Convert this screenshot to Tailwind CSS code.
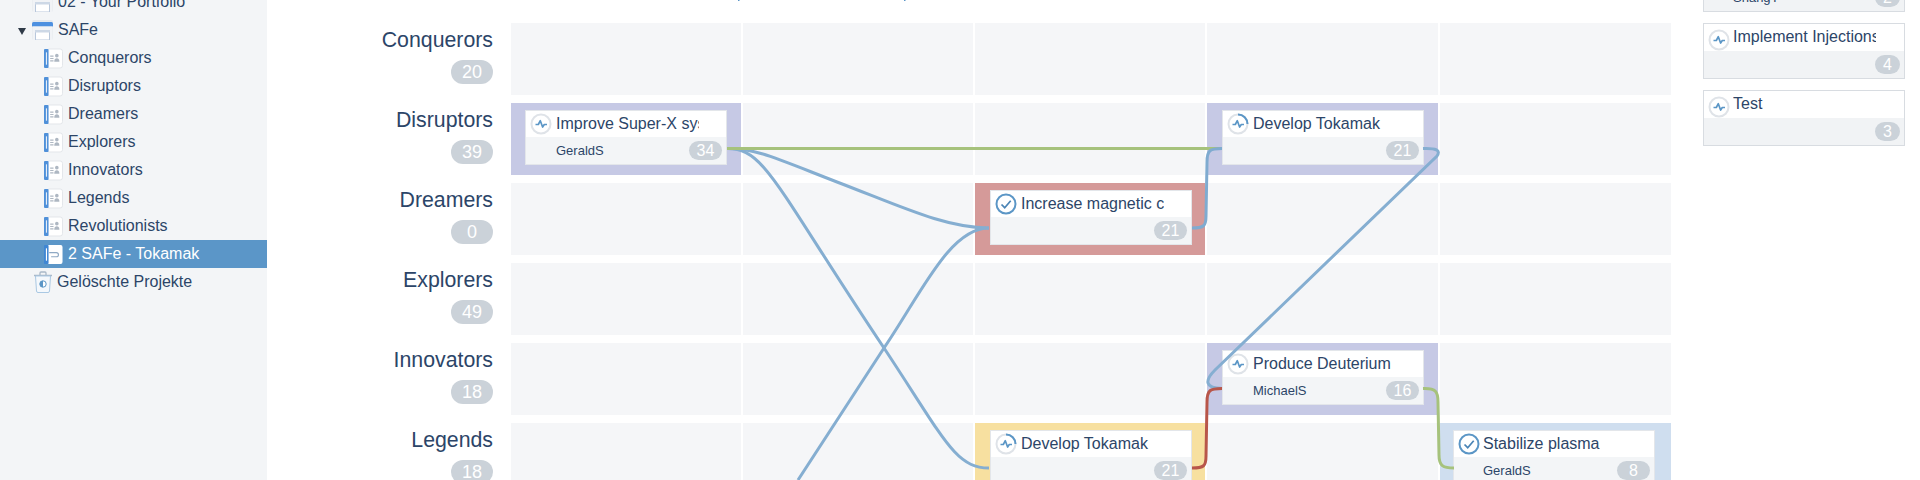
<!DOCTYPE html>
<html lang="de">
<head>
<meta charset="utf-8">
<title>2 SAFe - Tokamak</title>
<script src="https://cdn.jsdelivr.net/npm/@tailwindcss/browser@4"></script>
</head>
<body class="bg-white">
<svg width="0" height="0" class="absolute">
  <defs>
    <symbol id="team" viewBox="0 0 20 21">
      <rect x="3" y="0.5" width="16.500" height="20" rx="2.500" fill="#ffffff" stroke="#e2e5e9"/>
      <rect x="0" y="0.5" width="4.800" height="20" rx="1" fill="#4f90d9"/>
      <rect x="2" y="4" width="1.200" height="13" fill="#e6eef8"/>
      <path d="M6.500 8h3.500M6.500 10.500h3.500M6.500 13h3.500" stroke="#aeb7c2" stroke-width="1.200"/>
      <circle cx="13.500" cy="7.500" r="1.900" fill="#aeb7c2"/>
      <path d="M10.800 13.800c0-2.600 1.200-3.500 2.700-3.500s2.700.9 2.700 3.500z" fill="#aeb7c2"/>
    </symbol>
    <symbol id="board" viewBox="0 0 20 21">
      <rect x="3" y="0.5" width="16.500" height="20" rx="2" fill="#ffffff"/>
      <rect x="0" y="0.5" width="4.800" height="20" rx="1" fill="#3f86d3"/>
      <rect x="2" y="4" width="1.200" height="13" fill="#ffffff"/>
      <path d="M5.500 8.500h7.500a2.200 2.200 0 0 1 0 4.400h-5.500" fill="none" stroke="#8fa9c4" stroke-width="1.200"/>
    </symbol>
    <symbol id="portfolio" viewBox="0 0 21 20">
      <rect x="0" y="0" width="21" height="20" rx="2" fill="#e4e8ed"/>
      <path d="M0 6.500V3.500q0-1.500 1.500-1.500h18q1.500 0 1.500 1.500v3z" fill="#4d90e0"/>
      <rect x="0.500" y="6.500" width="20" height="13.500" fill="#f1f3f6"/>
      <rect x="3.500" y="10.500" width="14" height="9.500" fill="#ffffff" stroke="#b8c7db"/>
      <rect x="3" y="10" width="15" height="2.500" fill="#cdd8e6"/>
    </symbol>
    <symbol id="pulse" viewBox="0 0 22 22">
      <path d="M5.500 11.500h2.800l2-3.800 2.300 6.300 1.700-2.500h2.700" fill="none" stroke="#5b96c6" stroke-width="1.700" stroke-linejoin="round"/>
    </symbol>
    <symbol id="ring" viewBox="0 0 22 22">
      <circle cx="11" cy="11" r="9.500" fill="#ffffff" stroke="#dfe3e8" stroke-width="2"/>
      <use href="#pulse"/>
    </symbol>
    <symbol id="progress" viewBox="0 0 22 22">
      <circle cx="11" cy="11" r="9.500" fill="#ffffff" stroke="#dfe3e8" stroke-width="2"/>
      <path d="M11 1.500A9.500 9.500 0 0 1 20.500 11" fill="none" stroke="#5b96c6" stroke-width="2"/>
      <use href="#pulse"/>
    </symbol>
    <symbol id="done" viewBox="0 0 22 22">
      <circle cx="11" cy="11" r="9.500" fill="#ffffff" stroke="#5b96c6" stroke-width="2"/>
      <path d="M6.500 11.500l3.200 3.200 6-7" fill="none" stroke="#4a84b5" stroke-width="1.700"/>
    </symbol>
  </defs>
</svg>

<div class="relative flex h-[480px] w-[1920px] overflow-hidden font-['Liberation_Sans',Arial,sans-serif] text-[#2c4568]">

  <!-- Sidebar -->
  <aside class="h-full w-[267px] shrink-0 bg-[#f3f5f7] text-[16px]">
    <div class="-mt-[12px] flex flex-col">
      <div class="flex h-[28px] items-center pl-[32px]"><svg class="mr-[5px] h-[20px] w-[21px]"><use href="#portfolio"/></svg><span class="-mt-[1px]">02 - Your Portfolio</span></div>
      <div class="relative flex h-[28px] items-center pl-[32px]"><span class="absolute left-[18px] top-[12px] h-0 w-0 border-x-[4px] border-t-[7px] border-x-transparent border-t-[#2f3a47]"></span><svg class="mr-[5px] h-[20px] w-[21px]"><use href="#portfolio"/></svg><span class="-mt-[1px]">SAFe</span></div>
      <div class="flex h-[28px] items-center pl-[44px]"><svg class="mr-[5px] h-[21px] w-[19px]"><use href="#team"/></svg><span class="-mt-[1px]">Conquerors</span></div>
      <div class="flex h-[28px] items-center pl-[44px]"><svg class="mr-[5px] h-[21px] w-[19px]"><use href="#team"/></svg><span class="-mt-[1px]">Disruptors</span></div>
      <div class="flex h-[28px] items-center pl-[44px]"><svg class="mr-[5px] h-[21px] w-[19px]"><use href="#team"/></svg><span class="-mt-[1px]">Dreamers</span></div>
      <div class="flex h-[28px] items-center pl-[44px]"><svg class="mr-[5px] h-[21px] w-[19px]"><use href="#team"/></svg><span class="-mt-[1px]">Explorers</span></div>
      <div class="flex h-[28px] items-center pl-[44px]"><svg class="mr-[5px] h-[21px] w-[19px]"><use href="#team"/></svg><span class="-mt-[1px]">Innovators</span></div>
      <div class="flex h-[28px] items-center pl-[44px]"><svg class="mr-[5px] h-[21px] w-[19px]"><use href="#team"/></svg><span class="-mt-[1px]">Legends</span></div>
      <div class="flex h-[28px] items-center pl-[44px]"><svg class="mr-[5px] h-[21px] w-[19px]"><use href="#team"/></svg><span class="-mt-[1px]">Revolutionists</span></div>
      <div class="flex h-[28px] items-center bg-[#5b96c8] pl-[44px] text-white"><svg class="mr-[5px] h-[21px] w-[19px]"><use href="#board"/></svg><span class="-mt-[1px]">2 SAFe - Tokamak</span></div>
      <div class="flex h-[28px] items-center pl-[33px]">
        <svg class="mr-[4px] h-[22px] w-[20px]" viewBox="0 0 20 22">
          <path d="M1 4.500h18M7 4V2q0-1 1-1h4q1 0 1 1v2" fill="none" stroke="#a9b8c8" stroke-width="1.300"/>
          <path d="M2.500 5l1 15q.1 1.500 1.500 1.500h10q1.400 0 1.500-1.500l1-15z" fill="#f4f8fc" stroke="#a9c8e3" stroke-width="1"/>
          <circle cx="10" cy="13" r="3.200" fill="#ffffff" stroke="#5b96c6"/>
          <path d="M10 9.800a3.200 3.200 0 0 0 0 6.400z" fill="#5b96c6"/>
        </svg>
        <span class="-mt-[1px]">Gelöschte Projekte</span>
      </div>
    </div>
  </aside>

  <!-- Board -->
  <main class="w-[1404px] shrink-0 pt-[23px]">
    <div class="flex flex-col gap-[8px]">

      <div class="flex h-[72px]">
        <div class="flex w-[244px] flex-col items-end pr-[18px] pt-[5px]"><div class="text-[21.300px] leading-[24px]">Conquerors</div><div class="mt-[8px] flex h-[24px] w-[42px] items-center justify-center rounded-full bg-[#cbd2d9] text-[18px] text-white">20</div></div>
        <div class="grid w-[1160px] grid-cols-[230px_230px_230px_231px_231px] gap-[2px]">
          <div class="bg-[#f5f6f8]"></div><div class="bg-[#f5f6f8]"></div><div class="bg-[#f5f6f8]"></div><div class="bg-[#f5f6f8]"></div><div class="bg-[#f5f6f8]"></div>
        </div>
      </div>

      <div class="flex h-[72px]">
        <div class="flex w-[244px] flex-col items-end pr-[18px] pt-[5px]"><div class="text-[21.300px] leading-[24px]">Disruptors</div><div class="mt-[8px] flex h-[24px] w-[42px] items-center justify-center rounded-full bg-[#cbd2d9] text-[18px] text-white">39</div></div>
        <div class="grid w-[1160px] grid-cols-[230px_230px_230px_231px_231px] gap-[2px]">
          <div class="bg-[#c6c9e5] px-[14px] py-[7px]">
            <div class="h-[55px] border border-[#e3e6ea] bg-[#f3f5f7]">
              <div class="flex h-[26px] items-center bg-white pl-[4px]"><svg class="mr-[4px] h-[22px] w-[22px] shrink-0"><use href="#ring"/></svg><div class="w-[143px] overflow-hidden whitespace-nowrap text-[16px]">Improve Super-X system</div></div>
              <div class="flex h-[27px] items-center justify-between pl-[30px] pr-[4px]"><span class="text-[13px]">GeraldS</span><span class="flex h-[19px] w-[33px] items-center justify-center rounded-full bg-[#cbd2d9] text-[16px] text-white">34</span></div>
            </div>
          </div>
          <div class="bg-[#f5f6f8]"></div><div class="bg-[#f5f6f8]"></div>
          <div class="bg-[#c6c9e5] pl-[15px] pr-[14px] py-[7px]">
            <div class="h-[55px] border border-[#e3e6ea] bg-[#f3f5f7]">
              <div class="flex h-[26px] items-center bg-white pl-[4px]"><svg class="mr-[4px] h-[22px] w-[22px] shrink-0"><use href="#progress"/></svg><div class="w-[143px] overflow-hidden whitespace-nowrap text-[16px]">Develop Tokamak</div></div>
              <div class="flex h-[27px] items-center justify-end pr-[4px]"><span class="flex h-[19px] w-[33px] items-center justify-center rounded-full bg-[#cbd2d9] text-[16px] text-white">21</span></div>
            </div>
          </div>
          <div class="bg-[#f5f6f8]"></div>
        </div>
      </div>

      <div class="flex h-[72px]">
        <div class="flex w-[244px] flex-col items-end pr-[18px] pt-[5px]"><div class="text-[21.300px] leading-[24px]">Dreamers</div><div class="mt-[8px] flex h-[24px] w-[42px] items-center justify-center rounded-full bg-[#cbd2d9] text-[18px] text-white">0</div></div>
        <div class="grid w-[1160px] grid-cols-[230px_230px_230px_231px_231px] gap-[2px]">
          <div class="bg-[#f5f6f8]"></div><div class="bg-[#f5f6f8]"></div>
          <div class="bg-[#d59a99] pl-[15px] pr-[13px] py-[7px]">
            <div class="h-[55px] border border-[#e3e6ea] bg-[#f3f5f7]">
              <div class="flex h-[26px] items-center bg-white pl-[4px]"><svg class="mr-[4px] h-[22px] w-[22px] shrink-0"><use href="#done"/></svg><div class="w-[143px] overflow-hidden whitespace-nowrap text-[16px]">Increase magnetic c</div></div>
              <div class="flex h-[27px] items-center justify-end pr-[4px]"><span class="flex h-[19px] w-[33px] items-center justify-center rounded-full bg-[#cbd2d9] text-[16px] text-white">21</span></div>
            </div>
          </div>
          <div class="bg-[#f5f6f8]"></div><div class="bg-[#f5f6f8]"></div>
        </div>
      </div>

      <div class="flex h-[72px]">
        <div class="flex w-[244px] flex-col items-end pr-[18px] pt-[5px]"><div class="text-[21.300px] leading-[24px]">Explorers</div><div class="mt-[8px] flex h-[24px] w-[42px] items-center justify-center rounded-full bg-[#cbd2d9] text-[18px] text-white">49</div></div>
        <div class="grid w-[1160px] grid-cols-[230px_230px_230px_231px_231px] gap-[2px]">
          <div class="bg-[#f5f6f8]"></div><div class="bg-[#f5f6f8]"></div><div class="bg-[#f5f6f8]"></div><div class="bg-[#f5f6f8]"></div><div class="bg-[#f5f6f8]"></div>
        </div>
      </div>

      <div class="flex h-[72px]">
        <div class="flex w-[244px] flex-col items-end pr-[18px] pt-[5px]"><div class="text-[21.300px] leading-[24px]">Innovators</div><div class="mt-[8px] flex h-[24px] w-[42px] items-center justify-center rounded-full bg-[#cbd2d9] text-[18px] text-white">18</div></div>
        <div class="grid w-[1160px] grid-cols-[230px_230px_230px_231px_231px] gap-[2px]">
          <div class="bg-[#f5f6f8]"></div><div class="bg-[#f5f6f8]"></div><div class="bg-[#f5f6f8]"></div>
          <div class="bg-[#c6c9e5] pl-[15px] pr-[14px] py-[7px]">
            <div class="h-[55px] border border-[#e3e6ea] bg-[#f3f5f7]">
              <div class="flex h-[26px] items-center bg-white pl-[4px]"><svg class="mr-[4px] h-[22px] w-[22px] shrink-0"><use href="#ring"/></svg><div class="w-[143px] overflow-hidden whitespace-nowrap text-[16px]">Produce Deuterium</div></div>
              <div class="flex h-[27px] items-center justify-between pl-[30px] pr-[4px]"><span class="text-[13px]">MichaelS</span><span class="flex h-[19px] w-[33px] items-center justify-center rounded-full bg-[#cbd2d9] text-[16px] text-white">16</span></div>
            </div>
          </div>
          <div class="bg-[#f5f6f8]"></div>
        </div>
      </div>

      <div class="flex h-[72px]">
        <div class="flex w-[244px] flex-col items-end pr-[18px] pt-[5px]"><div class="text-[21.300px] leading-[24px]">Legends</div><div class="mt-[8px] flex h-[24px] w-[42px] items-center justify-center rounded-full bg-[#cbd2d9] text-[18px] text-white">18</div></div>
        <div class="grid w-[1160px] grid-cols-[230px_230px_230px_231px_231px] gap-[2px]">
          <div class="bg-[#f5f6f8]"></div><div class="bg-[#f5f6f8]"></div>
          <div class="bg-[#f7e0a0] pl-[15px] pr-[13px] py-[7px]">
            <div class="h-[55px] border border-[#e3e6ea] bg-[#f3f5f7]">
              <div class="flex h-[26px] items-center bg-white pl-[4px]"><svg class="mr-[4px] h-[22px] w-[22px] shrink-0"><use href="#progress"/></svg><div class="w-[143px] overflow-hidden whitespace-nowrap text-[16px]">Develop Tokamak</div></div>
              <div class="flex h-[27px] items-center justify-end pr-[4px]"><span class="flex h-[19px] w-[33px] items-center justify-center rounded-full bg-[#cbd2d9] text-[16px] text-white">21</span></div>
            </div>
          </div>
          <div class="bg-[#f5f6f8]"></div>
          <div class="bg-[#cfdeef] pl-[13px] pr-[16px] py-[7px]">
            <div class="h-[55px] border border-[#e3e6ea] bg-[#f3f5f7]">
              <div class="flex h-[26px] items-center bg-white pl-[4px]"><svg class="mr-[3px] h-[22px] w-[22px] shrink-0"><use href="#done"/></svg><div class="w-[143px] overflow-hidden whitespace-nowrap text-[16px]">Stabilize plasma</div></div>
              <div class="flex h-[27px] items-center justify-between pl-[29px] pr-[4px]"><span class="text-[13px]">GeraldS</span><span class="flex h-[19px] w-[33px] items-center justify-center rounded-full bg-[#cbd2d9] text-[16px] text-white">8</span></div>
            </div>
          </div>
        </div>
      </div>

    </div>
  </main>

  <!-- Backlog column -->
  <section class="ml-[32px] -mt-[44px] flex w-[202px] shrink-0 flex-col gap-[11px]">
    <div class="h-[56px] shrink-0 border border-[#d8dce1] bg-[#f1f3f5]">
      <div class="h-[27px] bg-white"></div>
      <div class="flex h-[27px] items-center justify-between pl-[29px] pr-[4px]"><span class="text-[13px]">ShangY</span><span class="flex h-[19px] w-[25px] items-center justify-center rounded-full bg-[#cbd2d9] text-[16px] text-white">2</span></div>
    </div>
    <div class="h-[56px] shrink-0 border border-[#d8dce1] bg-[#f1f3f5]">
      <div class="flex h-[27px] items-center bg-white pl-[4px]"><svg class="mr-[3px] mt-[4px] h-[22px] w-[22px] shrink-0"><use href="#ring"/></svg><div class="-mt-[2px] w-[143px] overflow-hidden whitespace-nowrap text-[16px]">Implement Injections</div></div>
      <div class="flex h-[27px] items-center justify-end pr-[4px]"><span class="flex h-[19px] w-[25px] items-center justify-center rounded-full bg-[#cbd2d9] text-[16px] text-white">4</span></div>
    </div>
    <div class="h-[56px] shrink-0 border border-[#d8dce1] bg-[#f1f3f5]">
      <div class="flex h-[27px] items-center bg-white pl-[4px]"><svg class="mr-[3px] mt-[4px] h-[22px] w-[22px] shrink-0"><use href="#ring"/></svg><div class="-mt-[2px] w-[143px] overflow-hidden whitespace-nowrap text-[16px]">Test</div></div>
      <div class="flex h-[27px] items-center justify-end pr-[4px]"><span class="flex h-[19px] w-[25px] items-center justify-center rounded-full bg-[#cbd2d9] text-[16px] text-white">3</span></div>
    </div>
  </section>

  <!-- Dependency lines over the board -->
  <svg class="pointer-events-none absolute left-0 top-0 h-[480px] w-[1920px]" viewBox="0 0 1920 480" fill="none" stroke-width="3">
    <path d="M738 0h1.500M904 0h1.500" stroke="#5b96c8" stroke-width="2"/>
    <path d="M727 148.500C765 148 775 185 884 348C945 440 955 468 989 468" stroke="#85aed1"/>
    <path d="M727 148.500C755 148 775 158 837 182C900 206 945 228 989 228" stroke="#85aed1"/>
    <path d="M798 480L884 348C922 292 950 228 989 228" stroke="#85aed1"/>
    <path d="M727 148.500H1222" stroke="#a6c27c"/>
    <path d="M1192 228C1204 228 1206 226 1206 216L1207 162C1207 150 1210 148.500 1222 148.500" stroke="#7fabd0"/>
    <path d="M1423 148.500C1436 148 1441 150 1437 156L1215 370C1205 380 1204 388 1222 388.500" stroke="#85aed1"/>
    <path d="M1192 468C1204 468 1206 466 1206 456L1207 402C1207 390 1210 388.500 1222 388.500" stroke="#b8564a"/>
    <path d="M1423 388.500C1436 388 1438 392 1438 402L1439 455C1439 466 1443 468 1454 468" stroke="#a6c27c"/>
  </svg>
</div>
</body>
</html>
